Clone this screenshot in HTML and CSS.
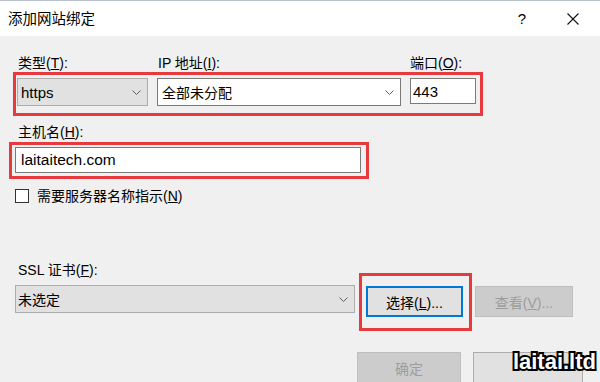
FILE: index.html
```html
<!DOCTYPE html>
<html lang="zh-CN">
<head>
    <meta charset="UTF-8">
    <meta name="viewport" content="width=device-width, initial-scale=1.0">
    <title>添加网站绑定</title>
    <link rel="stylesheet" href="styles.css">
</head>
<body>
    <div class="dialog">
        <div class="titlebar">
            <span class="title">添加网站绑定</span>
            <div class="caption">
                <span class="cap_btn">?</span>
                <span class="cap_btn">
                    <svg width="12" height="12" viewBox="0 0 12 12"><path d="M0.5 0.5L11.5 11.5M11.5 0.5L0.5 11.5" stroke="#111" stroke-width="1.1" fill="none"/></svg>
                </span>
            </div>
        </div>

        <div class="labels">
            <span>类型(<u>T</u>):</span>
            <span>IP 地址(<u>I</u>):</span>
            <span>端口(<u>O</u>):</span>
        </div>
        <div class="mark mark_binding">
            <div class="combo combo_type">
                <span>https</span>
                <svg class="chevron" width="9" height="5" viewBox="0 0 9 5"><path d="M0.5 0.5L4.5 4.5L8.5 0.5" stroke="#606060" fill="none"/></svg>
            </div>
            <div class="combo field combo_ip">
                <span class="cjk">全部未分配</span>
                <svg class="chevron" width="9" height="5" viewBox="0 0 9 5"><path d="M0.5 0.5L4.5 4.5L8.5 0.5" stroke="#606060" fill="none"/></svg>
            </div>
            <div class="field port">443</div>
        </div>

        <div class="row_label host_label">主机名(<u>H</u>):</div>
        <div class="mark mark_host">
            <div class="field host">laitaitech.com</div>
        </div>

        <div class="check_row">
            <span class="checkbox"></span>
            <span>需要服务器名称指示(<u>N</u>)</span>
        </div>

        <div class="row_label ssl_label">SSL 证书(<u>F</u>):</div>
        <div class="cert_row">
            <div class="combo combo_cert">
                <span class="cjk">未选定</span>
                <svg class="chevron" width="9" height="5" viewBox="0 0 9 5"><path d="M0.5 0.5L4.5 4.5L8.5 0.5" stroke="#606060" fill="none"/></svg>
            </div>
            <div class="mark mark_select">
                <button class="btn btn_focus">选择(<u>L</u>)...</button>
            </div>
            <button class="btn btn_view" disabled>查看(<u>V</u>)...</button>
        </div>

        <div class="footer">
            <button class="btn btn_ok" disabled>确定</button>
            <button class="btn btn_cancel"></button>
        </div>

        <div class="watermark">laitai.ltd</div>
    </div>
</body>
</html>
```

FILE: styles.css
```css
* {
    margin: 0;
    padding: 0;
    box-sizing: border-box;
}
body {
    font-family: "Liberation Sans", "Noto Sans CJK SC", sans-serif;
    font-size: 14px;
    color: #000;
    background: #f0f0f0;
}
.dialog {
    width: 600px;
    height: 382px;
    overflow: hidden;
    position: relative;
    background: #f0f0f0;
}
.titlebar {
    height: 36px;
    background: #fff;
    border-top: 1px solid #b9c3cf;
    display: flex;
    align-items: center;
    padding-left: 8px;
}
.title {
    font-size: 14.5px;
    line-height: 16px;
    padding-top: 1px;
}
.caption {
    margin-left: auto;
    display: flex;
}
.cap_btn {
    width: 52px;
    height: 34px;
    display: flex;
    align-items: center;
    justify-content: center;
    font-size: 15px;
}
.cap_btn svg {
    margin-left: -2px;
}

/* red annotation boxes */
.mark {
    border: 3px solid #e63a3f;
}

.labels {
    margin-top: 19px;
    padding-left: 18px;
    display: grid;
    grid-template-columns: 140px 252px auto;
    line-height: 16px;
}
.mark_binding {
    margin: 1px 0 0 13px;
    width: 470px;
    height: 44px;
    padding: 3px 0 0 1px;
    display: flex;
    align-items: flex-start;
    gap: 9px;
}
.combo {
    height: 28px;
    display: flex;
    align-items: center;
    justify-content: space-between;
    padding: 0 6px 0 3px;
    background: #e1e1e1;
    border: 1px solid #adadad;
    font-size: 15px;
}
.field {
    background: #fff;
    border: 1px solid #7a7a7a;
    display: flex;
    align-items: center;
    font-size: 15px;
}
.combo.field {
    background: #fff;
    border-color: #7a7a7a;
}
.cjk {
    font-size: 14px;
}
.combo_type {
    width: 131px;
}
.combo_ip {
    width: 244px;
    padding-left: 4px;
}
.port {
    width: 66px;
    height: 26px;
    padding-left: 2px;
}

.row_label {
    line-height: 16px;
    padding-left: 18px;
}
.host_label {
    margin-top: 8px;
}
.mark_host {
    margin: 2px 0 0 9px;
    width: 360px;
    height: 37px;
    padding: 2px 5px 0 3px;
}
.host {
    height: 26px;
    padding-left: 5px;
    font-size: 15.5px;
}

.check_row {
    margin: 10px 0 0 15px;
    display: flex;
    align-items: center;
    gap: 8px;
    height: 14px;
    line-height: 16px;
}
.checkbox {
    width: 14px;
    height: 14px;
    background: #fff;
    border: 1px solid #333;
}

.ssl_label {
    margin-top: 59px;
}
.cert_row {
    margin: 7px 0 0 15px;
    display: flex;
    align-items: flex-start;
}
.combo_cert {
    width: 340px;
    padding-left: 2px;
}
.mark_select {
    margin: -12px 0 0 4px;
    padding: 10px 6px 11px 4px;
}
.btn {
    font-family: inherit;
    font-size: 14px;
    height: 31px;
    background: #e1e1e1;
    border: 1px solid #adadad;
    color: #000;
}
.btn:disabled {
    background: #cccccc;
    border-color: #bfbfbf;
    color: #9d9d9d;
}
.btn_focus {
    width: 97px;
    border: 2px solid #0078d7;
}
.btn_view {
    width: 98px;
    margin: 1px 0 0 3px;
}

.footer {
    margin-top: 21px;
    padding-right: 17px;
    display: flex;
    justify-content: flex-end;
    gap: 12px;
}
.btn_ok {
    width: 104px;
    height: 32px;
}
.btn_cancel {
    width: 110px;
    height: 32px;
}

.watermark {
    position: absolute;
    right: 4px;
    bottom: 8px;
    font-size: 22px;
    font-weight: 700;
    line-height: 24px;
    color: #fff;
    -webkit-text-stroke: 4px #000;
    paint-order: stroke fill;
}
```
